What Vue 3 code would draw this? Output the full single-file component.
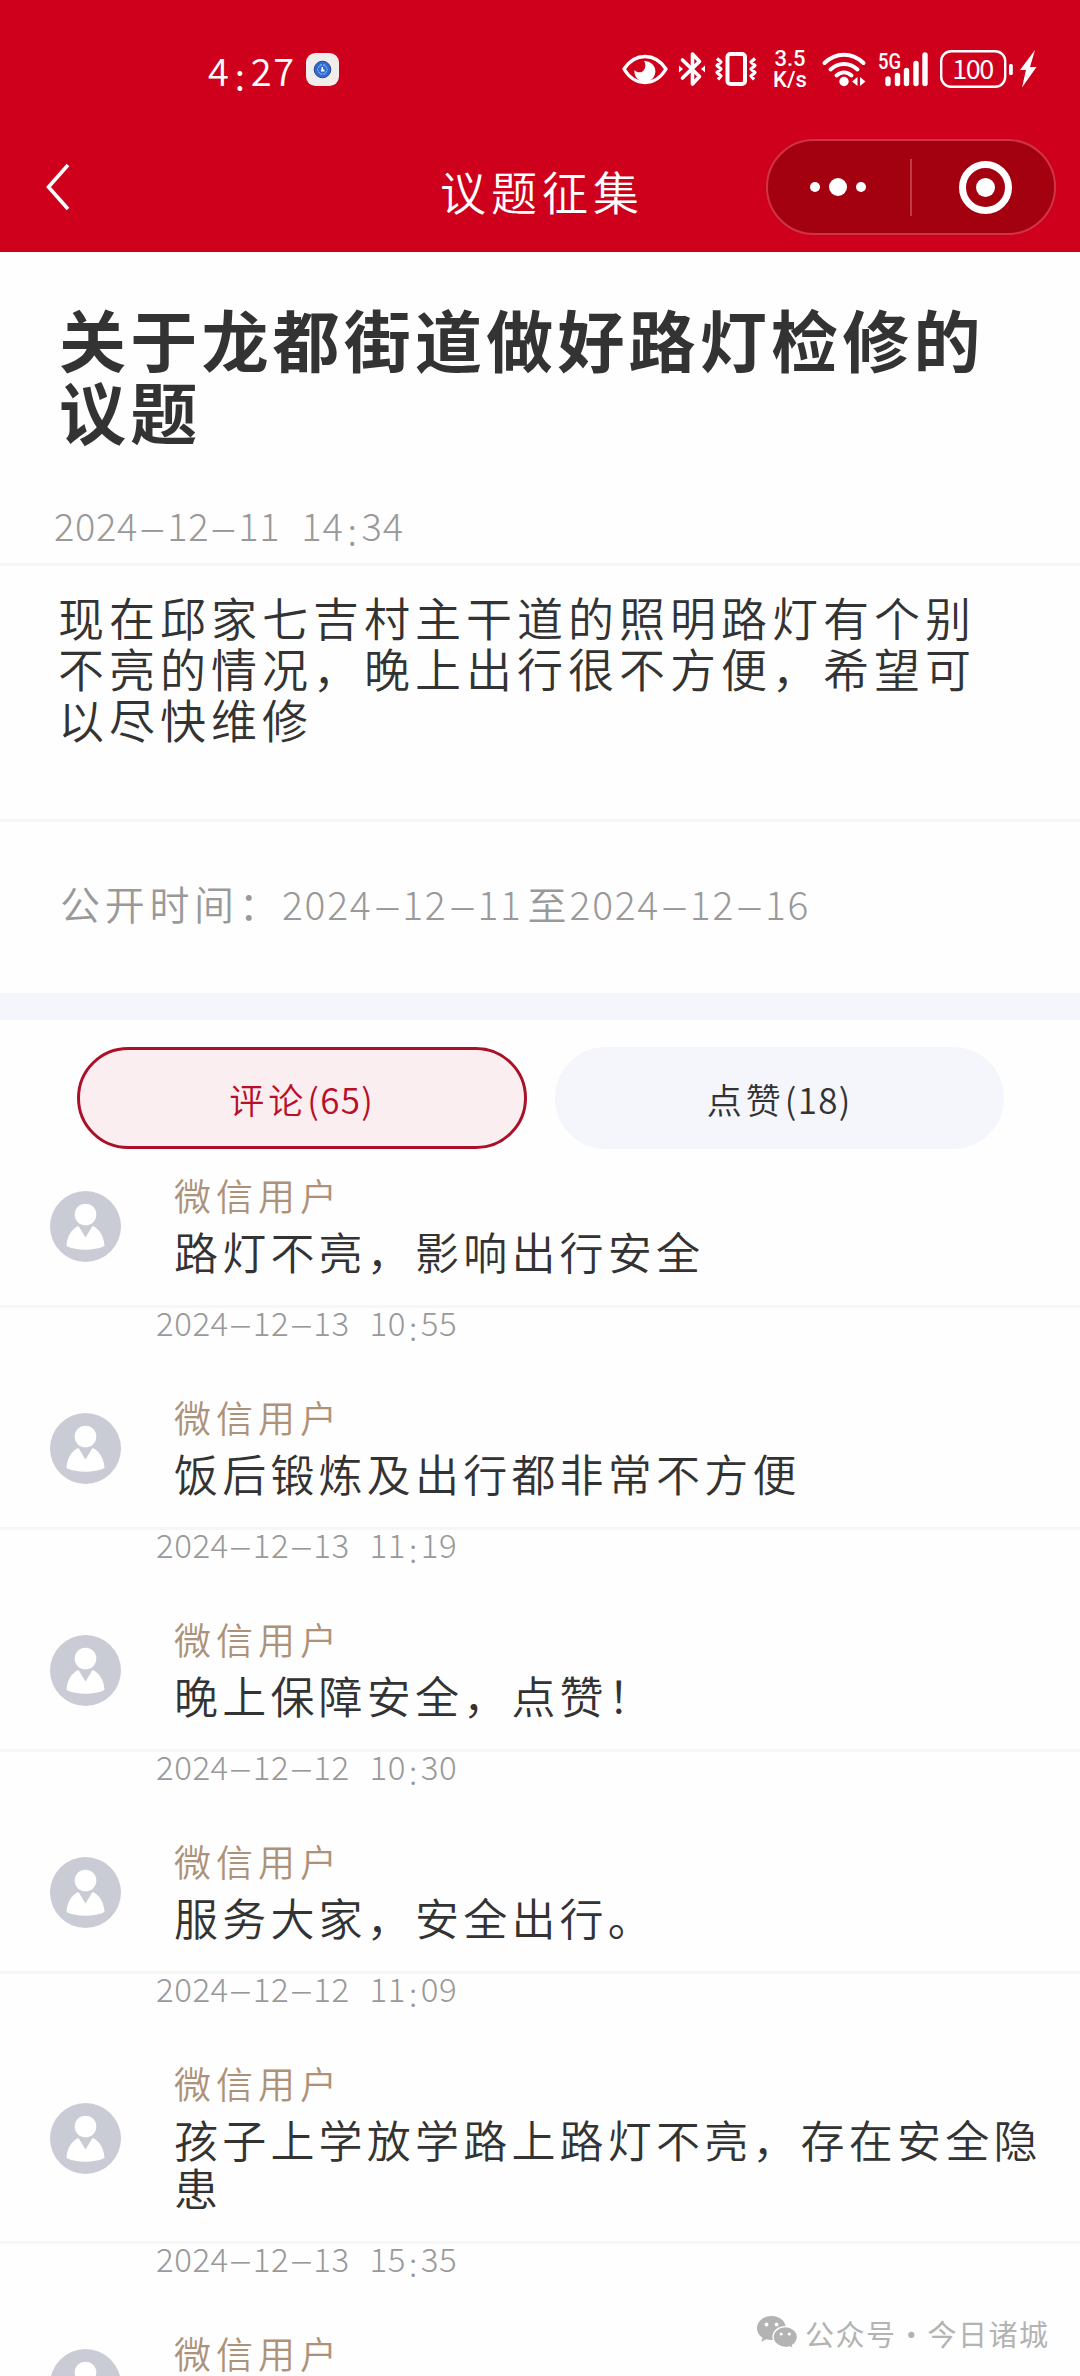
<script setup>
import { h } from 'vue'

const comments = [
  { user: '微信用户', text: '路灯不亮，影响出行安全', time: '2024-12-13 10:55' },
  { user: '微信用户', text: '饭后锻炼及出行都非常不方便', time: '2024-12-13 11:19' },
  { user: '微信用户', text: '晚上保障安全，点赞！', time: '2024-12-12 10:30' },
  { user: '微信用户', text: '服务大家，安全出行。', time: '2024-12-12 11:09' },
  { user: '微信用户', text: '孩子上学放学路上路灯不亮，存在安全隐患', time: '2024-12-13 15:35' },
  { user: '微信用户', text: '', time: '' },
]

// Date text with wide dashes and a lowered colon
const Stamp = (props) =>
  h(
    'span',
    { class: 'stamp' },
    props.value.split(/([-:])/).map((part) => {
      if (part === '-') return h('i', { class: 'dash' }, [h('b', '-')])
      if (part === ':') return h('i', { class: 'colon' }, ':')
      return part
    })
  )
Stamp.props = ['value']
</script>

<template>
  <div class="page">
    <header class="top">
      <div class="status">
        <div class="clock">
          <Stamp value="4:27" />
          <svg class="app" width="33" height="33" viewBox="0 0 33 33">
            <rect width="33" height="33" rx="9.500" fill="#f0eeec" />
            <circle cx="16.500" cy="16.500" r="8.300" fill="#2f6bd0" stroke="#23468c" stroke-width="1" />
            <path d="M14 12h5l2.500 4.500-2.500 4.500h-5l-2.500-4.500z" fill="none" stroke="#a9c8f5" stroke-width="1" stroke-dasharray="2 1" />
            <path d="M15.500 14h1.500v2.500h1.500v2h-3.500v-2h.5z" fill="#fff" />
          </svg>
        </div>
        <div class="indicators">
          <svg width="46" height="36" viewBox="0 0 46 36">
            <path d="M2 18C8 9 15 5.500 23 5.500S38 9 44 18C38 28 31 31.500 23 31.500S8 28 2 18z" fill="none" stroke="#fff" stroke-width="3.400" stroke-linejoin="round" />
            <path d="M22 10A10.500 10.500 0 1 1 12.500 19c2 2.500 6.500 3.500 9 .5 2.500-3 2.500-6.500.5-9.500z" fill="#fff" />
          </svg>
          <svg class="bt" width="26" height="36" viewBox="0 0 26 36">
            <path d="M3.500 9l17 16.500-7 7.500V3l7 7.500L3.500 27" fill="none" stroke="#fff" stroke-width="3.600" stroke-linejoin="round" stroke-linecap="round" />
            <path d="M0 14.500l4 3.500-4 3.500zM26 14.500L22 18l4 3.500z" fill="#fff" />
          </svg>
          <svg class="vib" width="42" height="36" viewBox="0 0 42 36">
            <rect x="12.500" y="3" width="17.500" height="30" rx="3" fill="none" stroke="#fff" stroke-width="4" />
            <path d="M2 7.500l4 3.500-4 3.500 4 3.500-4 3.500 4 3.500-3 3.500M40 7.500l-4 3.500 4 3.500-4 3.500 4 3.500-4 3.500 3 3.500" fill="none" stroke="#fff" stroke-width="3.200" stroke-linejoin="round" />
          </svg>
          <div class="speed"><span>3.5</span><span>K/s</span></div>
          <svg class="wifi" width="44" height="36" viewBox="0 0 44 36">
            <g fill="none" stroke="#fff" stroke-width="4" stroke-linecap="round">
              <path d="M2.500 12C14 1 30 1 41.500 12" />
              <path d="M8.500 18.500c8-7.500 19-7.500 27 0" />
              <path d="M14.500 24.500c4.500-4 10.500-4 15 0" />
            </g>
            <circle cx="22" cy="30.500" r="4.700" fill="#fff" />
            <path d="M35.500 26v9l-5.500-4.500zM38 26v9l5.500-4.500z" fill="#fff" />
          </svg>
          <svg class="signal" width="50" height="36" viewBox="0 0 50 36">
            <text x="0" y="17.500" textLength="23" lengthAdjust="spacingAndGlyphs">5G</text>
            <g stroke="#fff" stroke-width="5.400" stroke-linecap="round">
              <path d="M10 28v4.500M19.500 24.500v8M28.500 19.500v13M38 12.500V32.500M47 4v28.500" />
            </g>
          </svg>
          <svg class="batt" width="75" height="38" viewBox="0 0 75 38">
            <rect x="1.200" y="1.200" width="64" height="35.600" rx="10" fill="none" stroke="#fff" stroke-width="2.400" />
            <text x="33.200" y="28.500" text-anchor="middle" textLength="42">100</text>
            <rect x="69" y="14" width="3.800" height="11" rx="1.500" fill="#fff" />
          </svg>
          <svg class="bolt" width="18" height="38" viewBox="0 0 18 38">
            <path d="M16 0L1 20h6L3 37.500 17.500 17H11z" fill="#fff" />
          </svg>
        </div>
      </div>
      <div class="nav">
        <svg class="back" width="26" height="48" viewBox="0 0 26 48">
          <path d="M23 2L3.500 24 23 46" fill="none" stroke="#fff" stroke-width="3.600" />
        </svg>
        <h1>议题征集</h1>
        <div class="capsule">
          <span class="dots"><i></i><i class="big"></i><i></i></span>
          <span class="sep"></span>
          <span class="target"><i></i></span>
        </div>
      </div>
    </header>

    <h2 class="title">关于龙都街道做好路灯检修的议题</h2>
    <div class="posted"><Stamp value="2024-12-11 14:34" /></div>
    <p class="content">现在邱家七吉村主干道的照明路灯有个别不亮的情况，晚上出行很不方便，希望可以尽快维修</p>
    <div class="period">
      <span class="label">公开时间：</span><Stamp value="2024-12-11" /><span class="to">至</span><Stamp value="2024-12-16" />
    </div>
    <div class="band"></div>
    <div class="tabs">
      <div class="tab active"><span>评论</span>(65)</div>
      <div class="tab"><span>点赞</span>(18)</div>
    </div>

    <div class="list">
      <div v-for="(c, i) in comments" :key="i" class="item">
        <div class="row">
          <svg class="avatar" width="71" height="71" viewBox="0 0 71 71">
            <circle cx="35.500" cy="35.500" r="35.500" fill="#c9ccd5" />
            <circle cx="35.500" cy="23.500" r="10.800" fill="#fff" />
            <path d="M28.500 35l7 11.500 7-11.500C50 38 54 46 54.500 55c-10 5-28 5-38 0C17 46 21 38 28.500 35z" fill="#fff" />
          </svg>
          <div class="body">
            <div class="user">{{ c.user }}</div>
            <div class="text">{{ c.text }}</div>
          </div>
        </div>
        <div class="time"><Stamp :value="c.time" /></div>
      </div>
    </div>

    <div class="watermark">
      <svg width="41" height="33" viewBox="0 0 41 33">
        <path d="M14.500 0C6.500 0 0 5.300 0 12.200c0 4 2.200 7.400 5.600 9.600L4.300 26l5-2.700c1.800.5 3.500.8 5.200.8C22.600 24.100 29 18.800 29 12.100S22.600 0 14.500 0z" fill="#b3b3b3" />
        <circle cx="9.500" cy="8.500" r="1.900" fill="#fff" />
        <circle cx="19.500" cy="8.500" r="1.900" fill="#fff" />
        <path d="M28.300 10.600c-6.800 0-12.200 4.600-12.200 10.400s5.400 10.400 12.200 10.400c1.500 0 2.900-.2 4.200-.6l4 2.200-1-3.600c3.100-1.900 5-5 5-8.400 0-5.800-5.400-10.400-12.200-10.400z" fill="#b3b3b3" stroke="#fff" stroke-width="1.400" />
        <circle cx="24.200" cy="18" r="1.600" fill="#fff" />
        <circle cx="32.300" cy="18" r="1.600" fill="#fff" />
      </svg>
      <span>公众号<em>·</em>今日诸城</span>
    </div>
  </div>
</template>

<style>
body {
  margin: 0;
  background: #fff;
}
</style>

<style scoped>
.page {
  position: relative;
  width: 1080px;
  height: 2376px;
  overflow: hidden;
  background: #fefefe;
  color: #333;
  font-family: 'Noto Sans CJK SC', sans-serif;
  font-weight: 350;
}
h1,
h2,
p {
  margin: 0;
  font-weight: 350;
}
svg {
  display: block;
  flex: none;
  overflow: visible;
}
.stamp {
  white-space: pre;
  font-weight: 300;
  letter-spacing: var(--ls, 0);
  word-spacing: 12px;
}
:deep(.dash) {
  display: inline-block;
  width: var(--dash, 29px);
  text-align: center;
  font-style: normal;
  letter-spacing: 0;
}
:deep(.dash b) {
  display: inline-block;
  font-weight: inherit;
  transform: scaleX(2.3);
}
:deep(.colon) {
  position: relative;
  top: 0.14em;
  margin: 0 var(--colon, 4px);
  font-style: normal;
}
.top {
  height: 252px;
  background: #cf001b;
  color: #fff;
}
.status {
  display: flex;
  justify-content: space-between;
  height: 139px;
  padding: 0 43px 0 208px;
  box-sizing: border-box;
}
.clock {
  display: flex;
  gap: 10px;
  height: 40px;
  margin-top: 50px;
  line-height: 40px;
  font-size: 38px;
  --ls: 1.800px;
}
.clock .stamp {
  font-weight: 350;
}
.app {
  margin-top: 3px;
}
.indicators {
  display: flex;
  height: 38px;
  margin-top: 50px;
}
.indicators svg {
  margin-top: 1px;
}
.indicators .bt {
  margin-left: 11px;
}
.indicators .vib {
  margin-left: 10px;
}
.speed {
  display: flex;
  flex-direction: column;
  width: 36px;
  margin: -2px 0 0 15px;
  text-align: center;
  font-family: Roboto, sans-serif;
  font-weight: 500;
  font-size: 22px;
  line-height: 21px;
  white-space: nowrap;
}
.indicators .wifi {
  margin-left: 14px;
}
.indicators .signal {
  margin-left: 12px;
}
.indicators .batt {
  margin: 0 0 0 12px;
}
.indicators .bolt {
  margin: 0 0 0 4px;
}
.indicators text {
  fill: #fff;
  font-family: Roboto, sans-serif;
  font-weight: 500;
  font-size: 22px;
}
.indicators .batt text {
  font-family: 'Noto Sans CJK SC', sans-serif;
  font-weight: 400;
  font-size: 27px;
}
.nav {
  display: flex;
  align-items: flex-start;
  height: 96px;
}
.back {
  margin: 24px 0 0 45px;
}
h1 {
  margin-left: 369px;
  width: 220px;
  line-height: 102px;
  font-size: 46px;
  letter-spacing: 5px;
}
.capsule {
  display: flex;
  align-items: center;
  box-sizing: border-box;
  width: 290px;
  height: 96px;
  margin-left: 106px;
  border: 2px solid #cf3345;
  border-radius: 48px;
  background: #a30010;
}
.dots {
  display: flex;
  align-items: center;
  gap: 9px;
  width: 97px;
  padding-left: 42px;
}
.dots i {
  width: 10px;
  height: 10px;
  border-radius: 50%;
  background: #fff;
}
.dots .big {
  width: 18px;
  height: 18px;
}
.sep {
  width: 2px;
  height: 57px;
  margin-left: 3px;
  background: #c23a47;
}
.target {
  display: flex;
  align-items: center;
  justify-content: center;
  box-sizing: border-box;
  width: 53px;
  height: 53px;
  margin-left: 47px;
  border: 7px solid #fff;
  border-radius: 50%;
}
.target i {
  width: 19px;
  height: 19px;
  border-radius: 50%;
  background: #fff;
}
.title {
  margin: 50px 40px 0 59px;
  width: 950px;
  line-height: 72px;
  font-size: 67px;
  font-weight: 700;
  letter-spacing: 4.200px;
}
.posted {
  height: 120px;
  box-sizing: border-box;
  padding: 54px 0 0 54px;
  border-bottom: 3px solid #f6f6f6;
  line-height: 50px;
  font-size: 38px;
  color: #999;
  --ls: 0.700px;
}
.content {
  height: 256px;
  box-sizing: border-box;
  padding: 25px 80px 0 58px;
  border-bottom: 3px solid #f6f6f6;
  line-height: 51px;
  font-size: 46px;
  letter-spacing: 5px;
}
.period {
  display: flex;
  height: 171px;
  box-sizing: border-box;
  padding: 51px 0 0 60px;
  line-height: 60px;
  font-size: 39px;
  color: #999;
  --ls: 1.700px;
  --dash: 30px;
}
.label {
  width: 222px;
  font-size: 40px;
  letter-spacing: 4.700px;
  white-space: nowrap;
}
.to {
  padding: 0 3px 0 5px;
}
.band {
  height: 27px;
  background: #f5f6fb;
}
.tabs {
  display: flex;
  gap: 28px;
  padding: 27px 76px 0 77px;
}
.tab {
  flex: 1;
  box-sizing: border-box;
  height: 102px;
  border: 3px solid #f5f6fb;
  border-radius: 51px;
  background: #f5f6fb;
  text-align: center;
  line-height: 98px;
  font-size: 35px;
  letter-spacing: 1.300px;
}
.tab span {
  letter-spacing: 4px;
}
.tab.active {
  border-color: #ab1029;
  background: #fbeef0;
  color: #b80f2b;
}
.row {
  display: flex;
  align-items: center;
  box-sizing: border-box;
  min-height: 159px;
  padding: 25px 20px 27px 50px;
  border-bottom: 3px solid #f6f6f6;
}
.body {
  margin: -3px 0 3px 53px;
}
.user {
  line-height: 48px;
  font-size: 37px;
  letter-spacing: 5px;
  color: #ad9279;
}
.text {
  min-height: 48px;
  margin-top: 8px;
  line-height: 48px;
  font-size: 44px;
  letter-spacing: 4.200px;
}
.time {
  height: 63px;
  padding-left: 156px;
  line-height: 28px;
  font-size: 33px;
  color: #999;
  --ls: 0.550px;
  --dash: 24px;
  --colon: 3px;
}
.watermark {
  position: absolute;
  left: 757px;
  top: 2316px;
  display: flex;
  gap: 7px;
  line-height: 34px;
  font-size: 29px;
  letter-spacing: 1.500px;
  font-weight: 400;
  color: #b3b3b3;
  white-space: nowrap;
}
.watermark em {
  display: inline-block;
  width: 31px;
  text-align: center;
  font-style: normal;
}
</style>
